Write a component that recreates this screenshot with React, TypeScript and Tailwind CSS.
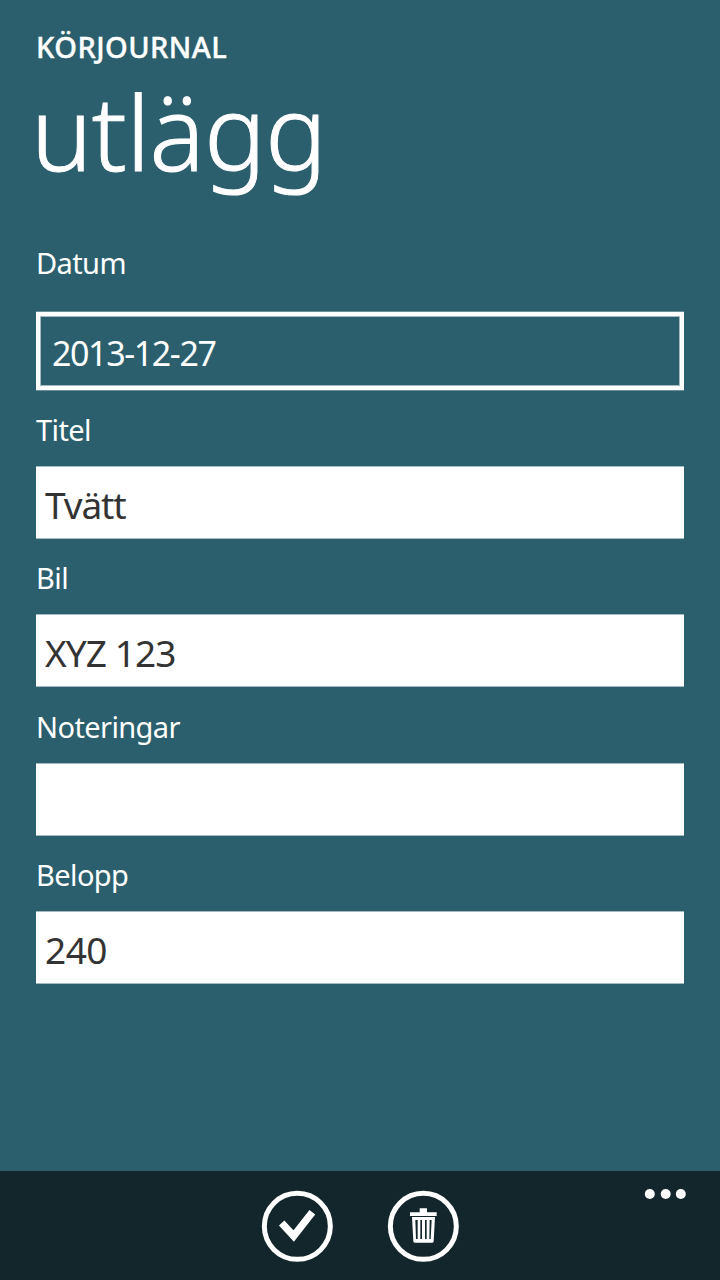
import React from "react";

function Label({ children }: { children: React.ReactNode }) {
  return (
    <div className="h-10 whitespace-nowrap text-[29px] leading-[39px] tracking-[-0.6px]">{children}</div>
  );
}

function Field({ value, className }: { value: string; className: string }) {
  return (
    <div
      className={`h-[73px] whitespace-nowrap border-y border-[#a4bac1] bg-white pl-[9px] pt-[3px] text-[37px] leading-[70px] text-[#333333] ${className}`}
    >
      {value}
    </div>
  );
}

export default function App() {
  return (
    <main className="flex h-[1280px] w-[720px] flex-col bg-[#2b5f6d] font-['Noto_Sans','Open_Sans',sans-serif] text-white">
      <header className="h-[243px] px-9 pt-[27px]">
        <div className="text-[29px] font-medium leading-10 tracking-[0.45px] [-webkit-text-stroke:0.4px_white]">
          KÖRJOURNAL
        </div>
        <h1 className="-ml-[5px] pt-[11px] text-[103px] font-light leading-[106px] tracking-[-0.6px] [-webkit-text-stroke:1px_white]">
          utlägg
        </h1>
      </header>
      <section className="flex-1 px-9">
        <Label>Datum</Label>
        <div className="mt-7 h-20 border-y border-[#6b8f99] bg-white">
          <div className="h-[78px] border-4 border-white bg-[#2b5f6d]">
            <div className="h-[70px] border border-[#a4bac1] pl-[11px] text-[34px] leading-[72px] tracking-[-1.4px]">
              2013-12-27
            </div>
          </div>
        </div>
        <div className="mt-[19px]">
          <Label>Titel</Label>
          <Field className="mt-4 tracking-[-1.1px]" value="Tvätt" />
        </div>
        <div className="mt-[19px]">
          <Label>Bil</Label>
          <Field className="mt-4 tracking-[-0.9px]" value="XYZ 123" />
        </div>
        <div className="mt-5">
          <Label>Noteringar</Label>
          <Field className="mt-4" value="" />
        </div>
        <div className="mt-[19px]">
          <Label>Belopp</Label>
          <Field className="mt-4 tracking-[-0.5px]" value="240" />
        </div>
      </section>
      <footer className="relative flex h-[109px] justify-center gap-[54px] bg-[#12262c] pt-[19px]">
        <button className="size-[72px]" aria-label="Spara">
          <svg className="size-[72px]" viewBox="33 90 216 216" fill="none">
            <circle cx="142" cy="199" r="99" stroke="white" strokeWidth="15" />
            <path d="M95 189 L131 228 L187 157" stroke="white" strokeWidth="22" />
          </svg>
        </button>
        <button className="size-[72px]" aria-label="Ta bort">
          <svg className="size-[72px]" viewBox="411 90 216 216" fill="none">
            <circle cx="520" cy="199" r="99" stroke="white" strokeWidth="15" />
            <path
              fill="white"
              fillRule="evenodd"
              d="M509 145h22v12h29v11h-80v-11h29zM486 171h69l-4 73q0 4-4 4h-53q-4 0-4-4zM496 180l2 57h5v-57zM511 180v57h5v-57zM525 180v57h5v-57zM539 180l-1 57h4l3-57z"
            />
          </svg>
        </button>
        <button className="absolute right-[34px] top-[18px] h-[10px] w-[42px]" aria-label="Mer">
          <svg className="h-[10px] w-[42px]" viewBox="0 0 42 10" fill="white">
            <circle cx="5.8" cy="5" r="5" />
            <circle cx="21.7" cy="5" r="5" />
            <circle cx="36.8" cy="5" r="5" />
          </svg>
        </button>
      </footer>
    </main>
  );
}
